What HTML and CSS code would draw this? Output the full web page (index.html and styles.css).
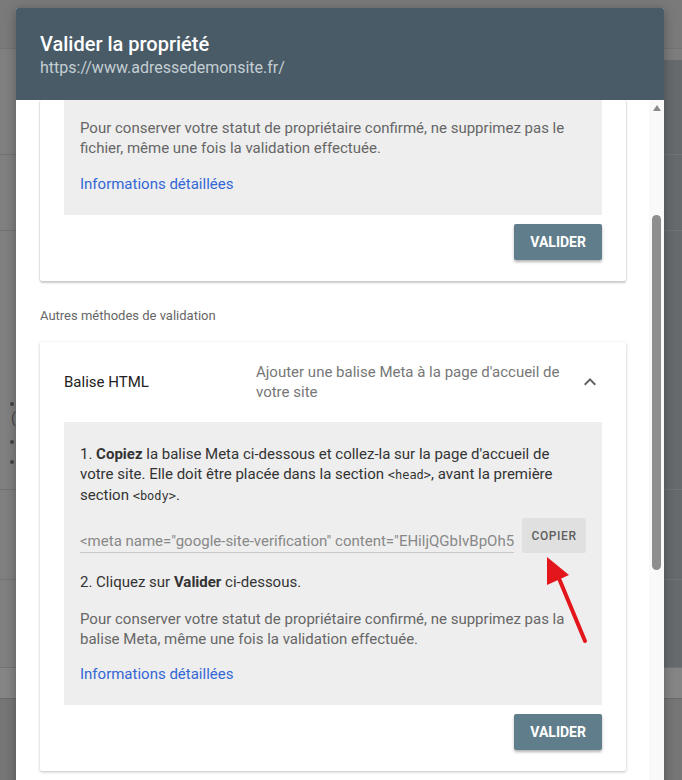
FILE: index.html
```html
<!DOCTYPE html>
<html lang="fr">
    <head>
        <meta charset="UTF-8">
        <meta name="viewport" content="width=device-width, initial-scale=1.0">
        <title>Valider la propriété</title>
        <link rel="stylesheet" href="styles.css">
    </head>

    <body>
        <!-- Page behind the dialog, dimmed -->
        <div class="backdrop">
            <div class="bg-top"></div>
            <div class="bg-row bg-row-a"></div>
            <div class="bg-row bg-row-b"></div>
            <div class="bg-row bg-row-c">
                <span class="bg-dot"></span>
                <span class="bg-paren">(</span>
                <span class="bg-dot"></span>
                <span class="bg-dot"></span>
            </div>
            <div class="bg-row bg-row-d"></div>
            <div class="bg-row bg-row-e"></div>
            <div class="bg-row bg-row-f"></div>
            <div class="bg-bottom"></div>
        </div>

        <div class="dialog">
            <div class="dialog-header">
                <h1>Valider la propriété</h1>
                <p>https://www.adressedemonsite.fr/</p>
            </div>

            <div class="dialog-body">
                <div class="dialog-content">
                    <div class="card card-cut">
                        <div class="info-box info-box-cut">
                            <p class="note">Pour conserver votre statut de propriétaire confirmé, ne supprimez pas le fichier, même une fois la validation effectuée.</p>
                            <a class="more-link" href="#">Informations détaillées</a>
                        </div>
                        <div class="card-actions">
                            <button class="btn-validate">VALIDER</button>
                        </div>
                    </div>

                    <div class="section-label">Autres méthodes de validation</div>

                    <div class="card">
                        <div class="method-head">
                            <div class="method-name">Balise HTML</div>
                            <div class="method-desc">Ajouter une balise Meta à la page d'accueil de votre site</div>
                            <svg class="chevron" width="24" height="24" viewBox="0 0 24 24">
                                <path d="M7.4 15.4 12 10.8l4.6 4.6L18 14l-6-6-6 6z" fill="#616161"/>
                            </svg>
                        </div>
                        <div class="info-box info-box-meta">
                            <p class="step">1. <b>Copiez</b> la balise Meta ci-dessous et collez-la sur la page d'accueil de votre site. Elle doit être placée dans la section <code>&lt;head&gt;</code>, avant la première section <code>&lt;body&gt;</code>.</p>
                            <div class="copy-row">
                                <div class="meta-field">&lt;meta name="google-site-verification" content="EHiljQGbIvBpOh5</div>
                                <button class="btn-copy">COPIER</button>
                            </div>
                            <p class="step step-two">2. Cliquez sur <b>Valider</b> ci-dessous.</p>
                            <p class="note">Pour conserver votre statut de propriétaire confirmé, ne supprimez pas la balise Meta, même une fois la validation effectuée.</p>
                            <a class="more-link more-link-tight" href="#">Informations détaillées</a>
                        </div>
                        <div class="card-actions">
                            <button class="btn-validate">VALIDER</button>
                        </div>
                    </div>
                </div>

                <div class="scrollbar">
                    <span class="scroll-up"></span>
                    <span class="scroll-thumb"></span>
                </div>

                <!-- annotation arrow pointing at the copy button -->
                <svg class="arrow" width="60" height="100" viewBox="0 0 60 100">
                    <line x1="44" y1="89" x2="17" y2="24" stroke="#e3161b" stroke-width="4" stroke-linecap="round"/>
                    <polygon points="6,5 28,23 6,33" fill="#e3161b"/>
                </svg>
            </div>
        </div>
    </body>
</html>
```

FILE: styles.css
```css
body {
    margin: 0;
    padding: 0;
    font-family: Roboto, "Noto Sans", Arial, sans-serif;
    background-color: #7b7b7b;
    overflow: hidden;
}

/* dimmed page behind */
.backdrop {
    height: 780px;
    display: flex;
    flex-direction: column;
}

.bg-top {
    height: 48px;
    background-color: #7a7a7a;
}

.bg-row {
    background-color: #808080;
    border-top: 1px solid #737373;
    background-image: linear-gradient(to right, #808080 664px, #666a6d 664px);
}

.bg-row-a {
    height: 105px;
    background-image: linear-gradient(to bottom, transparent 11px, #666a6d 11px),
        linear-gradient(to right, #808080 664px, #7d7d7d 664px);
    background-size: 100% 100%, 100% 100%;
    background-position: 664px 0, 0 0;
    background-repeat: no-repeat;
}

.bg-row-b {
    height: 75px;
}

.bg-row-c {
    height: 259px;
    display: flex;
    flex-direction: column;
    padding: 171px 0 0 10px;
    box-sizing: border-box;
}

.bg-dot {
    width: 4px;
    height: 4px;
    border-radius: 50%;
    background-color: #444;
}

.bg-paren {
    font-size: 14px;
    line-height: 16px;
    margin: 4px 0 14px 1px;
    color: #444;
}

.bg-dot + .bg-dot {
    margin-top: 16px;
}

.bg-row-d {
    height: 89px;
}

.bg-row-e {
    height: 87px;
}

.bg-row-f {
    height: 30px;
    background-image: none;
    background-color: #858585;
}

.bg-bottom {
    flex: 1;
    background-color: #767676;
    border-top: 1px solid #6a6a6a;
}

/* dialog */
.dialog {
    position: absolute;
    top: 8px;
    left: 16px;
    width: 648px;
    height: 800px;
    background-color: #fff;
    border-radius: 2px 2px 0 0;
    box-shadow: 0 2px 12px rgba(0, 0, 0, 0.3);
    display: flex;
    flex-direction: column;
}

.dialog-header {
    background-color: #485b67;
    color: #fff;
    height: 92px;
    padding: 23px 24px 0 24px;
    box-sizing: border-box;
    border-radius: 2px 2px 0 0;
}

.dialog-header h1 {
    margin: 0;
    font-size: 20px;
    line-height: 26px;
    font-weight: 500;
}

.dialog-header p {
    margin: 0;
    font-size: 16px;
    line-height: 22px;
    color: #c5ced3;
}

.dialog-body {
    flex: 1;
    display: flex;
    position: relative;
    overflow: hidden;
}

.dialog-content {
    flex: 1;
    padding: 0 23px 0 24px;
}

.card {
    background-color: #fff;
    box-shadow: 0 1px 3px rgba(0, 0, 0, 0.25);
    border-radius: 2px;
    padding: 0 24px 21px 24px;
}

.card-cut {
    box-shadow: 0 2px 2px rgba(0, 0, 0, 0.2), -1px 0 1px rgba(0, 0, 0, 0.08), 1px 0 1px rgba(0, 0, 0, 0.08);
}

.info-box {
    background-color: #eeeeee;
    padding: 22px 16px 22px 16px;
    font-size: 15px;
    line-height: 20px;
}

.info-box-cut {
    padding-top: 18px;
    padding-bottom: 21px;
}

.info-box-meta {
    padding-bottom: 21px;
}

.note {
    margin: 0;
    color: #666;
}

.more-link {
    display: block;
    margin-top: 16px;
    color: #3367d6;
    text-decoration: none;
}

.more-link-tight {
    margin-top: 15px;
}

.step {
    margin: 0;
    color: #333;
}

.step code {
    font-family: "DejaVu Sans Mono", monospace;
    font-size: 12px;
}

.step-two {
    margin-bottom: 17px;
}

.copy-row {
    display: flex;
    align-items: flex-start;
    gap: 8px;
    margin: 14px 0 19px 0;
}

.meta-field {
    flex: 1;
    margin-top: 11px;
    color: #888;
    font-size: 15px;
    line-height: 20px;
    white-space: nowrap;
    overflow: hidden;
    border-bottom: 1px solid #c8c8c8;
    padding-bottom: 1px;
}

.btn-copy {
    width: 64px;
    height: 35px;
    margin-top: -2px;
    border: none;
    border-radius: 2px;
    background-color: #e0e0e0;
    color: #5f5f5f;
    font-family: Roboto, Arial, sans-serif;
    font-size: 12px;
    font-weight: 500;
    letter-spacing: 0.6px;
    padding: 0;
}

.card-actions {
    display: flex;
    justify-content: flex-end;
    padding-top: 9px;
}

.btn-validate {
    width: 88px;
    height: 36px;
    border: none;
    border-radius: 2px;
    background-color: #607d8b;
    color: #fff;
    font-family: Roboto, Arial, sans-serif;
    font-size: 14px;
    font-weight: 700;
    box-shadow: 0 2px 3px rgba(0, 0, 0, 0.3);
}

.section-label {
    color: #666;
    font-size: 13px;
    line-height: 20px;
    padding: 25px 0 16px 0;
}

.method-head {
    display: flex;
    align-items: center;
    padding: 20px 0;
}

.method-name {
    width: 192px;
    font-size: 15px;
    color: #222;
}

.method-desc {
    flex: 1;
    color: #777;
    font-size: 15px;
    line-height: 20px;
    padding-right: 10px;
}

/* scrollbar */
.scrollbar {
    width: 16px;
    background-color: #f9f9f9;
    position: relative;
}

.scroll-up {
    position: absolute;
    top: 5px;
    left: 4px;
    width: 0;
    height: 0;
    border-left: 4px solid transparent;
    border-right: 4px solid transparent;
    border-bottom: 6px solid #8a8a8a;
}

.scroll-thumb {
    position: absolute;
    top: 115px;
    left: 3px;
    width: 9px;
    height: 355px;
    border-radius: 5px;
    background-color: #8e8e8e;
}

.arrow {
    position: absolute;
    top: 452px;
    left: 525px;
}
```
